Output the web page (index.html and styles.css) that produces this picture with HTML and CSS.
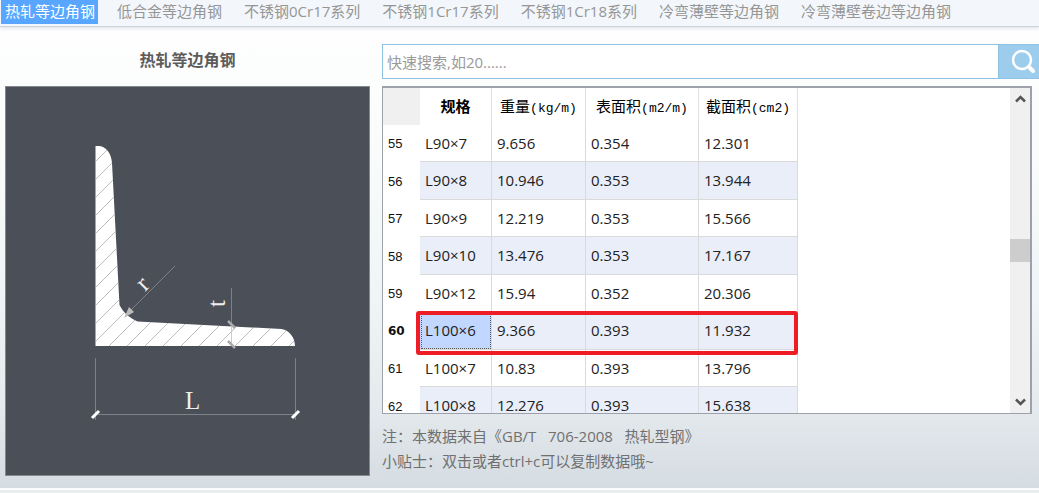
FILE: index.html
```
<!DOCTYPE html>
<html lang="zh-CN">
<head>
<meta charset="utf-8">
<title>热轧等边角钢</title>
<link rel="stylesheet" href="styles.css">
</head>
<body>
<nav class="tabs">
  <a class="tab tab-active" href="#">热轧等边角钢</a>
  <a class="tab" href="#">低合金等边角钢</a>
  <a class="tab" href="#">不锈钢0Cr17系列</a>
  <a class="tab" href="#">不锈钢1Cr17系列</a>
  <a class="tab" href="#">不锈钢1Cr18系列</a>
  <a class="tab" href="#">冷弯薄壁等边角钢</a>
  <a class="tab" href="#">冷弯薄壁卷边等边角钢</a>
</nav>
<main class="content">
  <section class="profile">
    <h1 class="title">热轧等边角钢</h1>
    <div class="drawing">
      <svg viewBox="0 0 365 390" role="img" aria-label="角钢截面">
        <defs>
          <pattern id="hatch" width="18" height="18" patternUnits="userSpaceOnUse" patternTransform="translate(3 1)">
            <path d="M-1 19 19 -1M-1 1 1 -1M17 19 19 17" stroke="#b4b4b4" stroke-width="0.9"/>
          </pattern>
          <path id="steel" d="M90.500 60h3c7 0 13 7 13.500 17l7.500 142c4 8 10 13 18 16.500l144 7.500c8 1 13.500 9 13.500 17H90.500z"/>
        </defs>
        <use href="#steel" fill="#fff"/>
        <use href="#steel" fill="url(#hatch)"/>
        <g fill="none" stroke="#7d8188">
          <path d="M90.500 272v62M290.500 272v62M90.500 328.500h200M226.500 202v38M125 225l45-45"/>
        </g>
        <path d="M226.500 240v19" stroke="#ccc"/>
        <path d="m119 232 5-11 5 5z" fill="#bbb"/>
        <path d="m223 235 7 7M223 255l7 7" stroke="#aaa" stroke-width="2.500"/>
        <path d="m87 332 7-7M287 332l7-7" stroke="#fff" stroke-width="3"/>
        <g class="dims">
          <text x="180" y="323">L</text>
          <text transform="translate(140 206) rotate(-45)">r</text>
          <text transform="translate(220 221) rotate(-90)">t</text>
        </g>
      </svg>
    </div>
  </section>
  <section class="data">
    <form class="search">
      <input class="search-box" type="text" placeholder="快速搜索,如20......" aria-label="快速搜索">
      <button class="search-button" type="button" aria-label="搜索">
        <svg width="28" height="28" viewBox="0 0 28 28" fill="none" stroke="#fff">
          <circle cx="13" cy="12" r="9" stroke-width="2.500"/>
          <path d="m20 19 4 4" stroke-width="4" stroke-linecap="round"/>
        </svg>
      </button>
    </form>
    <div class="grid-frame">
      <div class="grid-view">
        <table class="grid">
          <colgroup><col class="c-num"><col class="c-spec"><col class="c-weight"><col class="c-surface"><col class="c-area"></colgroup>
          <thead>
            <tr><td class="corner"></td><th class="sorted">规格</th><th>重量<span class="unit">(kg/m)</span></th><th>表面积<span class="unit">(m2/m)</span></th><th>截面积<span class="unit">(cm2)</span></th></tr>
          </thead>
          <tbody>
            <tr><th>55</th><td>L90×7</td><td>9.656</td><td>0.354</td><td>12.301</td></tr>
            <tr><th>56</th><td>L90×8</td><td>10.946</td><td>0.353</td><td>13.944</td></tr>
            <tr><th>57</th><td>L90×9</td><td>12.219</td><td>0.353</td><td>15.566</td></tr>
            <tr><th>58</th><td>L90×10</td><td>13.476</td><td>0.353</td><td>17.167</td></tr>
            <tr><th>59</th><td>L90×12</td><td>15.94</td><td>0.352</td><td>20.306</td></tr>
            <tr class="current"><th>60</th><td class="selected">L100×6</td><td>9.366</td><td>0.393</td><td>11.932</td></tr>
            <tr><th>61</th><td>L100×7</td><td>10.83</td><td>0.393</td><td>13.796</td></tr>
            <tr><th>62</th><td>L100×8</td><td>12.276</td><td>0.393</td><td>15.638</td></tr>
          </tbody>
        </table>
      </div>
      <div class="scrollbar">
        <button class="arrow" type="button" aria-label="向上"><svg width="11" height="8" viewBox="0 0 11 8"><path d="m1 6.500 4.500-4.500L10 6.500" fill="none" stroke="#555" stroke-width="2.500"/></svg></button>
        <div class="track"><div class="thumb"></div></div>
        <button class="arrow" type="button" aria-label="向下"><svg width="11" height="8" viewBox="0 0 11 8"><path d="m1 1.500 4.500 4.500L10 1.500" fill="none" stroke="#555" stroke-width="2.500"/></svg></button>
      </div>
    </div>
    <div class="notes">
      <p>注：本数据来自《GB/T   706-2008   热轧型钢》</p>
      <p>小贴士：双击或者ctrl+c可以复制数据哦~</p>
    </div>
  </section>
</main>
<footer class="bottom"></footer>
</body>
</html>
```

FILE: styles.css
```
* { box-sizing: border-box; }

body {
  margin: 0;
  height: 100vh;
  display: flex;
  flex-direction: column;
  overflow: hidden;
  font: 15px/22px "Open Sans", "Noto Sans CJK SC", sans-serif;
  color: #222;
}

.tabs {
  display: flex;
  gap: 16px;
  height: 27px;
  padding-left: 1px;
  background: #f3f7fb;
  border-bottom: 1px solid #ccd2dc;
  box-shadow: 0 1px 4px #d8dde4;
  z-index: 1;
}
.tab {
  height: 24px;
  padding: 0 3px;
  color: #969696;
  text-decoration: none;
  white-space: nowrap;
}
.tab-active {
  padding: 0 3px 0 4px;
  background: #58a6ff;
  color: #fff;
}

.content {
  flex: 1;
  min-height: 0;
  display: grid;
  grid-template-columns: 365fr 657fr;
  gap: 12px;
  padding: 17px 0 12px 5px;
  background: linear-gradient(#fefefe, #fafcfc 25%, #f0f4f6 60%, #e4eaed 82%, #d5dce2);
}
.profile, .data {
  display: flex;
  flex-direction: column;
  min-width: 0;
  min-height: 0;
}
.title {
  margin: 0;
  height: 42px;
  font-size: 16px;
  line-height: 32px;
  text-align: center;
  color: #5c5c5c;
}
.drawing {
  flex: 1;
  min-height: 0;
  background: #4b4f58;
  outline: 1px solid #85898f;
  outline-offset: -1px;
}
.drawing svg { display: block; width: 100%; height: 100%; }
.dims {
  font: 25px "Liberation Serif", serif;
  fill: #eee;
}

.search {
  display: flex;
  height: 35px;
  margin-bottom: 7px;
  border: 1px solid #8fc1e2;
  border-right: 0;
}
.search-box {
  flex: 1;
  min-width: 0;
  padding: 0 4px;
  border: 0;
  background: #fff;
  font: inherit;
}
.search-box::placeholder { color: #9a9a9a; opacity: 1; }
.search-button {
  width: 41px;
  padding: 0 0 0 7px;
  border: 0;
  border-left: 1px solid #8fc1e2;
  background: #9ccdec;
}
.search-button svg { display: block; margin: auto; }

.grid-frame {
  flex: 1;
  min-height: 0;
  display: flex;
  margin-right: 7px;
  border: 2px solid #9da2aa;
  border-width: 2px 2px 1px 1px;
  background: #fff;
}
.grid-view { flex: 1; overflow: hidden; }
.grid {
  table-layout: fixed;
  width: 415px;
  border-collapse: separate;
  border-spacing: 0;
}
.c-num { width: 37px; }
.c-spec { width: 72px; }
.c-weight { width: 94px; }
.c-surface { width: 113px; }
.c-area { width: 99px; }
.grid tr { height: 37px; }
.grid tbody tr:nth-child(even) { height: 38px; }
.grid th, .grid td { padding: 0; }
.grid thead th {
  padding-bottom: 2px;
  border-right: 1px solid #dfdfdf;
  font-weight: 400;
  color: #000;
  white-space: nowrap;
}
.grid thead .sorted { font-weight: 700; }
.grid .corner { background: #f0f0f0; }
.unit { font: 13px "Liberation Mono", monospace; }
.grid tbody th {
  padding-left: 5px;
  font: 13px "Liberation Sans", sans-serif;
  text-align: left;
  color: #111;
}
.grid tbody td {
  padding: 0 0 1px 5px;
  border-right: 1px solid #dadada;
  border-bottom: 1px solid #dadada;
}
.grid tbody tr:nth-child(even) td { background: #e9eef9; }
.grid .current { position: relative; }
.grid .current th { font: bold 12px "DejaVu Sans", sans-serif; }
.grid tbody .current .selected {
  background: #c2d7ff;
  outline: 1px dotted #555;
  outline-offset: -2px;
}
.current::after {
  content: "";
  position: absolute;
  left: 33px;
  right: 0;
  top: -1px;
  bottom: -5px;
  border: 4px solid #ee1c25;
  border-radius: 3px;
}

.scrollbar {
  width: 20px;
  display: flex;
  flex-direction: column;
  background: #f0f0f0;
}
.arrow {
  height: 22px;
  padding: 0;
  border: 0;
  background: none;
}
.arrow svg { display: block; margin: auto; }
.track {
  flex: 1;
  display: grid;
  grid-template-rows: 46fr 8fr 46fr;
}
.thumb { grid-row: 2; background: #cdcdcd; }

.notes {
  padding: 10px 0 2px;
  line-height: 25px;
  color: #707070;
}
.notes p { margin: 0; white-space: pre-wrap; }

.bottom {
  height: 5px;
  border-top: 2px solid #fafcfd;
  background: #e8edee;
}
```
